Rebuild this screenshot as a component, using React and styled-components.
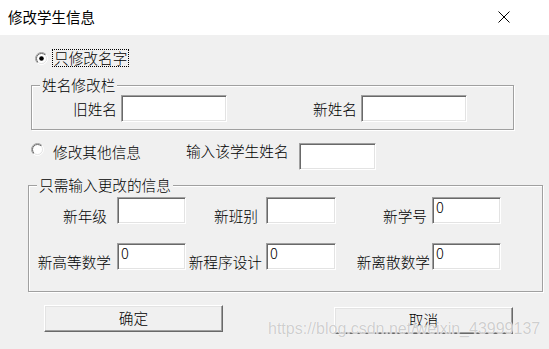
import React from 'react';
import styled, { createGlobalStyle } from 'styled-components';

const GlobalStyle = createGlobalStyle`
  html, body {
    margin: 0;
    padding: 0;
    background: #f0f0f0;
  }
  body {
    font-family: "Noto Sans CJK SC", "Noto Sans", sans-serif;
  }
`;

const Window = styled.div`
  position: relative;
  width: 549px;
  height: 349px;
  overflow: hidden;
  background: #f0f0f0;
  color: #000;
  font-size: 14.67px;
  font-weight: 300;
  line-height: 15px;
`;

const TitleBar = styled.div`
  height: 35px;
  box-sizing: border-box;
  background: #fff;
  display: flex;
  align-items: center;
  justify-content: space-between;
  padding: 0 39px 1px 8px;
`;

const Title = styled.span`
  font-size: 14.5px;
  font-weight: 400;
  line-height: 16px;
`;

const Body = styled.div`
  display: flex;
  flex-direction: column;
  align-items: flex-start;
`;

const OptionRow = styled.div`
  display: flex;
  align-items: ${p => p.$align || 'center'};
  margin-top: ${p => p.$top}px;
  padding-left: ${p => p.$left}px;
`;

const RadioBox = styled.span`
  display: inline-flex;
  width: 13px;
  height: 13px;
  flex-shrink: 0;
`;

const RadioLabel = styled.span`
  margin-left: ${p => p.$gap}px;
  padding: 0 1px;
  border: 1px dotted ${p => (p.$focused ? '#000' : 'transparent')};
  line-height: 16px;
`;

const Text = styled.span`
  margin-left: ${p => p.$left || 0}px;
  white-space: nowrap;
`;

const Edit = styled.div`
  width: ${p => p.$w}px;
  height: 27px;
  box-sizing: border-box;
  margin-left: ${p => p.$left || 0}px;
  background: #fff;
  border: 1px solid;
  border-color: #a0a0a0 #fff #fff #a0a0a0;
  box-shadow: inset 1px 1px 0 #696969, inset -1px -1px 0 #e3e3e3;
  padding: 1px 3px;
  font-size: 14.67px;
  line-height: 15px;
`;

const Group = styled.div`
  position: relative;
  box-sizing: border-box;
  margin-left: ${p => p.$left}px;
  margin-top: ${p => p.$top}px;
  width: ${p => p.$w}px;
  height: ${p => p.$h}px;
  border: 1px solid #a0a0a0;
  box-shadow: 1px 1px 0 #fff, inset 1px 1px 0 #fff;
`;

const GroupLabel = styled.span`
  position: absolute;
  left: 8px;
  top: -9px;
  padding: 0 2px;
  background: #f0f0f0;
  white-space: nowrap;
`;

const NameRow = styled.div`
  display: flex;
  align-items: center;
  padding: 9px 0 0 41px;
`;

const Field = styled.div`
  display: flex;
  align-items: center;
  gap: 4px;
  margin-left: ${p => p.$left || 0}px;
`;

const InfoGrid = styled.div`
  display: grid;
  grid-template-columns: 88px 69px 80px 70px 96px 69px;
  grid-auto-rows: 27px;
  row-gap: 19px;
  padding-top: 11px;
`;

const GridLabel = styled.span`
  align-self: end;
  justify-self: end;
  padding-right: ${p => p.$gap}px;
  padding-bottom: 1px;
  white-space: nowrap;
`;

const ButtonRow = styled.div`
  display: flex;
  align-items: flex-start;
  margin-top: 13px;
`;

const Button = styled.div`
  width: 179px;
  height: 27px;
  box-sizing: border-box;
  margin-left: ${p => p.$left}px;
  margin-top: ${p => p.$top || 0}px;
  display: flex;
  align-items: center;
  justify-content: center;
  padding-bottom: 2px;
  background: #f0f0f0;
  border: 1px solid;
  border-color: #fff #696969 #696969 #fff;
  box-shadow: inset -1px -1px 0 #a0a0a0, inset 1px 1px 0 #e3e3e3;
`;

const Watermark = styled.div`
  position: absolute;
  left: 268px;
  top: 320px;
  font-family: "Liberation Sans", Arial, sans-serif;
  font-size: 16px;
  font-weight: 400;
  line-height: 18px;
  color: rgba(185, 185, 185, 0.7);
  text-shadow: 0 0 1px #fff, 0 0 1px #fff;
  white-space: nowrap;
  pointer-events: none;
`;

const Radio = ({ id, checked }) => (
  <RadioBox>
    <svg width="13" height="13" viewBox="0 0 13 13">
      <defs>
        <linearGradient id={`${id}o`} x1="0" y1="0" x2="1" y2="1">
          <stop offset="0.5" stopColor="#a0a0a0" />
          <stop offset="0.5" stopColor="#ffffff" />
        </linearGradient>
        <linearGradient id={`${id}i`} x1="0" y1="0" x2="1" y2="1">
          <stop offset="0.5" stopColor="#696969" />
          <stop offset="0.5" stopColor="#e3e3e3" />
        </linearGradient>
      </defs>
      <circle cx="6.5" cy="6.5" r="6" fill="none" stroke={`url(#${id}o)`} />
      <circle cx="6.5" cy="6.5" r="5" fill="#fff" stroke={`url(#${id}i)`} />
      {checked && <circle cx="6.5" cy="6.5" r="2.3" fill="#000" />}
    </svg>
  </RadioBox>
);

const CloseIcon = () => (
  <svg width="12" height="12" viewBox="0 0 12 12">
    <path d="M0.5 0.5 L11.5 11.5 M11.5 0.5 L0.5 11.5" stroke="#000" strokeWidth="1" />
  </svg>
);

const infoFields = [
  { label: '新年级', gap: 10, value: '' },
  { label: '新班别', gap: 8, value: '' },
  { label: '新学号', gap: 5, value: '0' },
  { label: '新高等数学', gap: 6, value: '0' },
  { label: '新程序设计', gap: 4, value: '0' },
  { label: '新离散数学', gap: 2, value: '0' }
];

const editWidths = [69, 70, 69];

export default function App() {
  return (
    <>
      <GlobalStyle />
      <Window>
        <TitleBar>
          <Title>修改学生信息</Title>
          <CloseIcon />
        </TitleBar>

        <Body>
          <OptionRow $top={14} $left={35}>
            <Radio id="r1" checked />
            <RadioLabel $gap={4} $focused>只修改名字</RadioLabel>
          </OptionRow>

          <Group $left={31} $top={18} $w={483} $h={45}>
            <GroupLabel>姓名修改栏</GroupLabel>
            <NameRow>
              <Field>
                <Text>旧姓名</Text>
                <Edit $w={106} />
              </Field>
              <Field $left={86}>
                <Text>新姓名</Text>
                <Edit $w={106} />
              </Field>
            </NameRow>
          </Group>

          <OptionRow $top={13} $left={31} $align="flex-start">
            <Radio id="r2" />
            <RadioLabel $gap={7}>修改其他信息</RadioLabel>
            <Text $left={43}>输入该学生姓名</Text>
            <Edit $w={77} $left={10} />
          </OptionRow>

          <Group $left={28} $top={15} $w={515} $h={107}>
            <GroupLabel>只需输入更改的信息</GroupLabel>
            <InfoGrid>
              {infoFields.map((f, i) => (
                <React.Fragment key={f.label}>
                  <GridLabel $gap={f.gap}>{f.label}</GridLabel>
                  <Edit $w={editWidths[i % 3]}>{f.value}</Edit>
                </React.Fragment>
              ))}
            </InfoGrid>
          </Group>

          <ButtonRow>
            <Button $left={44}>确定</Button>
            <Button $left={111} $top={2}>取消</Button>
          </ButtonRow>
        </Body>

        <Watermark>https://blog.csdn.net/weixin_43999137</Watermark>
      </Window>
    </>
  );
}
